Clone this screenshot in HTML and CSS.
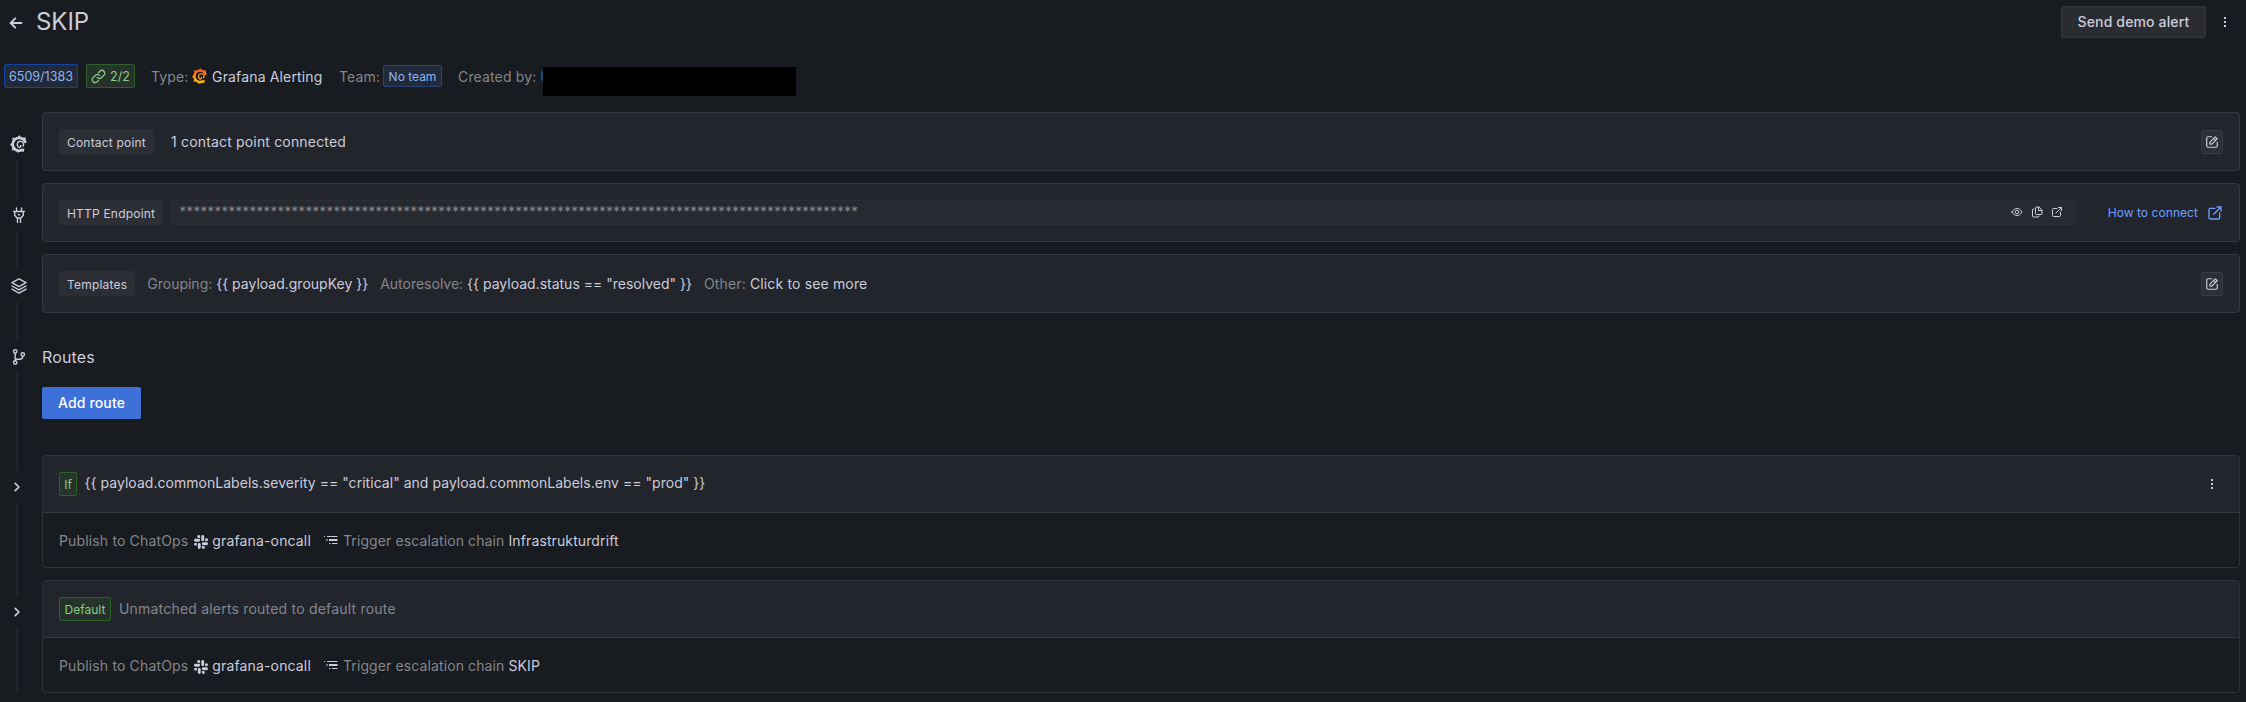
FILE: index.html
```html
<!DOCTYPE html>
<html lang="en">
<head>
<meta charset="utf-8">
<title>SKIP</title>
<link rel="stylesheet" href="styles.css">
</head>
<body>
<svg class="defs" width="0" height="0">
  <defs>
    <linearGradient id="flame" gradientUnits="userSpaceOnUse" x1="0" y1="24" x2="0" y2="0">
      <stop offset="0" stop-color="#fcc40c"/>
      <stop offset="0.5" stop-color="#f58a1c"/>
      <stop offset="1" stop-color="#ee4f27"/>
    </linearGradient>
    <symbol id="grafana" viewBox="0 0 24 24">
      <path fill="none" stroke-width="3.600" d="M20.600 10.500A8.600 8.600 0 1 0 17.600 19.100"/>
      <path fill="none" stroke-width="2" stroke-linecap="round" d="M17.600 14.600A4.200 4.200 0 1 0 12.600 16.600Q14.800 16.200 14.300 14"/>
      <path stroke="none" d="M9.500 4L12.600 0L15 4zM15.500 4L20.800 3L20.800 9zM4 9L3 3.300L8.600 4.200zM3 10L0 12.600L3 15.600zM3.500 15.500L2.200 20.600L7.500 19.600zM8.200 20.500L10.400 24L13.600 20.600zM14.500 20.300L18.600 22.600L19 17.600z"/>
    </symbol>
    <symbol id="edit" viewBox="0 0 24 24">
      <path d="M11.500 3H5a2 2 0 0 0-2 2v14a2 2 0 0 0 2 2h14a2 2 0 0 0 2-2v-6.500"/>
      <path d="M8.500 15.500v-3.300L17.600 3.100l3.300 3.300-9.100 9.100zM15 5.800l3.300 3.300"/>
    </symbol>
    <symbol id="external" viewBox="0 0 24 24">
      <path d="M12 5H5a2 2 0 0 0-2 2v12a2 2 0 0 0 2 2h12a2 2 0 0 0 2-2v-7M15 3h6v6M21 3L10 14"/>
    </symbol>
    <symbol id="dots" viewBox="0 0 16 16">
      <path fill="currentColor" stroke="none" d="M7 3h2v2H7zM7 7h2v2H7zM7 11h2v2H7z"/>
    </symbol>
    <symbol id="chevron" viewBox="0 0 16 16"><path stroke-width="1.700" d="M6.200 4.300L9.900 8 6.200 11.700"/></symbol>
    <symbol id="slack" viewBox="0 0 24 24">
      <path stroke="none" fill="currentColor" d="M8 0a2.500 2.500 0 0 1 2.500 2.500V5H8a2.500 2.500 0 0 1 0-5zM2.500 6.500h5.500a2.500 2.500 0 0 1 0 5H2.500a2.500 2.500 0 0 1 0-5zM24 8a2.500 2.500 0 0 1-2.500 2.500H19V8a2.500 2.500 0 0 1 5 0zM17.500 2.500V8a2.500 2.500 0 0 1-5 0V2.500a2.500 2.500 0 0 1 5 0zM16 24a2.500 2.500 0 0 1-2.500-2.500V19H16a2.500 2.500 0 0 1 0 5zM21.500 17.500H16a2.500 2.500 0 0 1 0-5h5.500a2.500 2.500 0 0 1 0 5zM0 16a2.500 2.500 0 0 1 2.500-2.500H5V16a2.500 2.500 0 0 1-5 0zM6.500 21.500V16a2.500 2.500 0 0 1 5 0v5.500a2.500 2.500 0 0 1-5 0z"/>
    </symbol>
    <symbol id="chain" viewBox="0 0 14 12">
      <path stroke="none" fill="currentColor" d="M0 2h1v1H0zM3 2h10.500v1H3zM5 5h8.500v2H5zM5 9h1.500v1H5zM8 9h5.500v1H8z"/>
      <path stroke="none" fill="currentColor" opacity=".5" d="M2 5h2v2H2z"/>
    </symbol>
  </defs>
</svg>

<header class="topbar">
  <svg class="icon back" viewBox="0 0 16 16" width="16" height="16"><path d="M13.500 8H3M7.300 3.300L2.600 8l4.700 4.700"/></svg>
  <h1>SKIP</h1>
  <button class="btn secondary">Send demo alert</button>
  <svg class="icon" width="16" height="16"><use href="#dots"/></svg>
</header>

<section class="meta">
  <span class="badge blue strong">6509/1383</span>
  <span class="badge green links"><svg class="icon link" viewBox="0 0 24 24" width="15" height="15"><path d="M10 13.500a4.500 4.500 0 0 0 6.700.5l4-4a4.600 4.600 0 0 0-6.500-6.500L12 5.700M14 10.500a4.500 4.500 0 0 0-6.700-.5l-4 4a4.600 4.600 0 0 0 6.500 6.500L12 18.300"/></svg>2/2</span>
  <span class="fact type"><span class="muted">Type:</span><svg class="flame" width="16" height="16"><use href="#grafana"/></svg>Grafana Alerting</span>
  <span class="fact team"><span class="muted label">Team:</span><span class="badge blue soft">No team</span></span>
  <span class="fact creator"><span class="muted label">Created by:</span><span class="avatar"></span><span class="redacted"></span></span>
</section>

<main class="timeline">
  <div class="rail first"><span class="node"><svg class="solid" width="18" height="18"><use href="#grafana"/></svg></span></div>
  <div class="card">
    <span class="tag">Contact point</span>
    <span class="contact">1 contact point connected</span>
    <button class="square"><svg class="icon" width="14" height="14"><use href="#edit"/></svg></button>
  </div>

  <div class="rail"><span class="node"><svg class="icon" viewBox="0 0 16 16" width="16" height="16"><path d="M5.500 1v3M10.500 1v3M2.500 4.500h11M3.700 4.500v3.800L6 11h4l2.300-2.700V4.500M6.500 11v4.500M9.500 11v4.500M7.500 7.700h1"/></svg></span></div>
  <div class="card">
    <span class="tag">HTTP Endpoint</span>
    <div class="secret"><span class="stars">*************************************************************************************************</span>
      <svg class="icon" viewBox="0 0 24 24" width="12" height="12"><path d="M2 12c2.500-4.700 6-7 10-7s7.500 2.300 10 7c-2.500 4.700-6 7-10 7s-7.500-2.300-10-7z"/><circle cx="12" cy="12" r="3.500"/></svg>
      <svg class="icon" viewBox="0 0 24 24" width="12" height="12"><path d="M15 2h-4a2 2 0 0 0-2 2v11a2 2 0 0 0 2 2h9a2 2 0 0 0 2-2V9zM15 2v7h7M6 6H5a2 2 0 0 0-2 2v12a2 2 0 0 0 2 2h9a2 2 0 0 0 2-2"/></svg>
      <svg class="icon" width="12" height="12"><use href="#external"/></svg>
    </div>
    <a class="howto">How to connect<svg class="icon" width="16" height="16"><use href="#external"/></svg></a>
  </div>

  <div class="rail"><span class="node"><svg class="icon" viewBox="0 0 16 16" width="16" height="16"><path d="M8 .8L15 4.700 8 8.600 1 4.700zM1 8l7 3.900L15 8M1 11.200l7 3.900 7-3.900"/></svg></span></div>
  <div class="card">
    <span class="tag">Templates</span>
    <span class="templates"><span class="tight"><span class="muted">Grouping:</span> {{ payload.groupKey }}</span><span class="tight"><span class="muted">Autoresolve:</span> {{ payload.status == "resolved" }}</span><span><span class="muted">Other:</span> Click to see more</span></span>
    <button class="square"><svg class="icon" width="14" height="14"><use href="#edit"/></svg></button>
  </div>

  <div class="rail"><span class="node"><svg class="icon" viewBox="0 0 16 16" width="16" height="16"><circle cx="4.200" cy="2.500" r="1.700"/><circle cx="4.200" cy="13.500" r="1.700"/><circle cx="11.800" cy="5.500" r="1.700"/><path d="M4.200 4.200v7.600M4.500 10.300H9q2.500 0 2.800-3"/></svg></span></div>
  <div class="routes">
    <h2>Routes</h2>
    <button class="btn primary">Add route</button>
  </div>

  <div class="rail"><span class="node toggle"><svg class="icon" width="16" height="16"><use href="#chevron"/></svg></span></div>
  <div class="route">
    <div class="route-head"><span class="badge green cond">If</span><span class="expr code">{{ payload.commonLabels.severity == "critical" and payload.commonLabels.env == "prod" }}</span><svg class="icon menu" width="16" height="16"><use href="#dots"/></svg></div>
    <div class="route-body"><span class="muted">Publish to ChatOps</span><svg class="slack" width="14" height="14"><use href="#slack"/></svg><span>grafana-oncall</span><svg class="chain" width="14" height="12"><use href="#chain"/></svg><span class="escalation"><span class="muted">Trigger escalation chain</span> Infrastrukturdrift</span></div>
  </div>

  <div class="rail last"><span class="node toggle"><svg class="icon" width="16" height="16"><use href="#chevron"/></svg></span></div>
  <div class="route">
    <div class="route-head"><span class="badge green cond default">Default</span><span class="expr muted">Unmatched alerts routed to default route</span></div>
    <div class="route-body"><span class="muted">Publish to ChatOps</span><svg class="slack" width="14" height="14"><use href="#slack"/></svg><span>grafana-oncall</span><svg class="chain" width="14" height="12"><use href="#chain"/></svg><span class="escalation"><span class="muted">Trigger escalation chain</span> SKIP</span></div>
  </div>
</main>
</body>
</html>
```
FILE: styles.css
```css
* { box-sizing: border-box; }
body {
  margin: 0;
  height: 702px;
  overflow: hidden;
  background: #181b1f;
  color: #ccccdc;
  font: 14px/22px Inter, "Liberation Sans", sans-serif;
  letter-spacing: 0.15px;
}
svg { flex: none; display: block; }
.defs { position: absolute; }
.icon { fill: none; stroke: currentColor; stroke-width: 2; stroke-linejoin: round; stroke-linecap: round; }
.icon[viewBox="0 0 16 16"] { stroke-width: 1.4; }
.icon.back { stroke-width: 1.9; margin-top: 2px; }
.muted { color: #85868c; }
h1, h2 { margin: 0; font-weight: 400; }

.topbar { display: flex; align-items: center; height: 44px; padding: 0 13px 0 8px; }
.topbar h1 { margin-left: 12px; font-size: 24px; line-height: 28px; letter-spacing: -0.05px; }
.btn { height: 32px; padding: 0; border: 0; border-radius: 2px; font: 500 14px/30px Inter, sans-serif; letter-spacing: 0.15px; color: inherit; }
.secondary { margin-left: auto; margin-right: 11px; width: 145px; background: #2b2c31; border: 1px solid #34363b; }
.primary { width: 99px; background: #3d71d9; color: #fff; }

.meta { display: flex; align-items: center; height: 24px; margin: 20px 0 24px 4px; }
.badge { display: inline-flex; align-items: center; justify-content: center; height: 24px; padding-top: 1px; border: 1px solid; border-radius: 2px; font-size: 12px; line-height: 20px; letter-spacing: 0; }
.blue { background: #202a3b; border-color: #12439a; color: #8fb3ee; }
.strong { width: 74px; font-size: 12.5px; }
.soft { width: 59px; height: 22px; border-color: #2b426f; }
.green { background: #25332a; border-color: #2d6128; color: #8fc98b; }
.links { width: 49px; margin-left: 8px; gap: 4px; font-size: 12.5px; }
.fact { display: flex; align-items: center; height: 24px; white-space: nowrap; }
.fact .muted { padding-top: 1px; }
.type { width: 188px; margin-left: 16px; padding-top: 1px; }
.type .muted { padding-top: 0; }
.team { width: 119px; }
.team .label { width: 44px; }
.creator .label { width: 83px; }
.flame { margin: 0 4px 1px 3.5px; fill: url(#flame); stroke: url(#flame); }
.solid { fill: #ccccdc; stroke: #ccccdc; }
.avatar { width: 2px; height: 10px; background: #134e80; border-radius: 2px 0 0 2px; }
.redacted { flex: none; width: 253px; height: 29px; margin-top: 11px; background: #000; }

.timeline { display: grid; grid-template-columns: 42px 2198px; grid-template-rows: 71px 71px 71px 130px 125px 113px; }
.rail { display: flex; flex-direction: column; }
.rail::before, .rail::after { content: ""; width: 2px; margin-left: 16px; background: #22252b; }
.rail::before { height: 16px; }
.rail::after { flex: 1; }
.rail.first::before { visibility: hidden; }
.node { height: 32px; padding-left: 3px; display: grid; place-items: center; width: 35px; }
.toggle { width: 33px; padding-left: 0; }

.card { display: flex; align-items: center; height: 59px; padding: 0 16px; background: #22252b; border: 1px solid #36383e; border-radius: 4px; }
.tag { height: 25px; padding: 2px 8px 0; border-radius: 2px; background: #2c2e35; font-size: 12px; line-height: 24px; letter-spacing: 0.2px; }
.contact { margin-left: 17px; letter-spacing: 0.17px; }
.square { display: grid; place-items: center; width: 22px; height: 24px; margin-left: auto; padding: 0; color: #ccccdc; background: #2e3037; border: 1px solid #3b3d44; border-radius: 2px; }
.secret { display: flex; align-items: center; gap: 8px; width: 1905px; height: 25px; margin-left: 8px; padding: 0 12px 2px 8px; background: #282a31; border: 1px solid #2c2e35; border-radius: 2px; }
.stars { flex: 1; margin-left: -1px; color: #85868c; letter-spacing: -0.015px; }
.howto { display: flex; align-items: center; gap: 9px; margin-left: auto; color: #6e9fff; font-size: 12px; letter-spacing: 0.06px; }
.templates { display: flex; gap: 12px; margin-left: 12px; }
.tight { letter-spacing: 0; }

.routes { padding-top: 21px; }
.routes h2 { height: 41px; font-size: 16px; line-height: 22px; }
.route { height: 113px; border: 1px solid #303338; border-radius: 4px; overflow: hidden; }
.route-head { display: flex; align-items: center; height: 57px; padding: 0 16px; background: #22252b; border-bottom: 1px solid #36383e; }
.cond { width: 18px; }
.cond.default { width: 52px; }
.expr { margin-left: 8px; letter-spacing: 0.2px; }
.expr.code { margin-left: 7.5px; padding-bottom: 2px; letter-spacing: 0.035px; }
.menu { margin-left: auto; margin-right: 3px; }
.route-body { display: flex; align-items: center; height: 55px; padding: 1px 16px 0; }
.slack { margin: 2px 4px 0 6px; color: #ccccdc; }
.chain { margin: 0 5px 2px 13px; }
.escalation { letter-spacing: 0.11px; }
```
